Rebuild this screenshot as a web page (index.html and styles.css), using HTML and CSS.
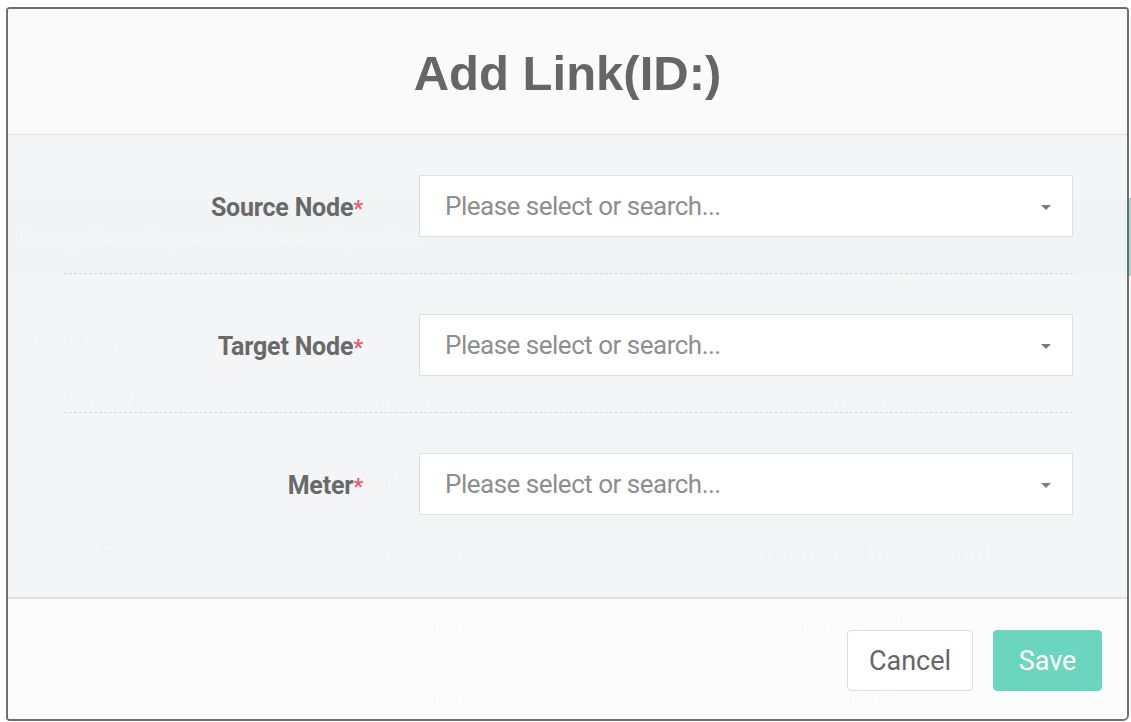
FILE: index.html
```html
<!DOCTYPE html>
<html lang="en">
<head>
<meta charset="utf-8">
<title>Add Link</title>
<link rel="stylesheet" href="styles.css">
</head>
<body>
<div class="stage">
  <div class="ghost" aria-hidden="true">
    <div class="ghost-band"><span>Energy flow diagram / Links configuration</span></div>
    <div class="ghost-toolbar"><span class="ghost-btn">&#8853; Add Link</span></div>
    <div class="ghost-table">
      <div class="g-row g-head"><span>Link ID &#8693;</span><span>Source Node &#8693;</span><span>Target Node &#8693;</span></div>
      <div class="g-row"><span>1</span><span>V li</span><span>public power</span></div>
      <div class="g-row"><span>5</span><span>public power</span><span>municipal power grid</span></div>
      <div class="g-row"><span>6</span><span>public power</span><span>office building</span></div>
      <div class="g-row g-last"><span>7</span><span>public power</span><span>hotel</span></div>
    </div>
  </div>

  <div class="modal">
    <header class="modal-header">
      <h1 class="modal-title">Add Link(ID:)</h1>
    </header>
    <div class="modal-body">
      <div class="form-row">
        <label class="form-label">Source Node<span class="req">*</span></label>
        <div class="select"><span class="placeholder">Please select or search...</span><span class="caret"></span></div>
      </div>
      <div class="form-row">
        <label class="form-label">Target Node<span class="req">*</span></label>
        <div class="select"><span class="placeholder">Please select or search...</span><span class="caret"></span></div>
      </div>
      <div class="form-row last">
        <label class="form-label">Meter<span class="req">*</span></label>
        <div class="select"><span class="placeholder">Please select or search...</span><span class="caret"></span></div>
      </div>
    </div>
    <footer class="modal-footer">
      <button class="btn btn-cancel" type="button">Cancel</button>
      <button class="btn btn-save" type="button">Save</button>
    </footer>
  </div>
</div>
</body>
</html>
```

FILE: styles.css
```css
* { box-sizing: border-box; }

html, body {
  margin: 0;
  padding: 0;
  background: #ffffff;
  font-family: Roboto, "Liberation Sans", Arial, sans-serif;
}

.stage {
  display: grid;
  grid-template-columns: 1131px;
  grid-template-rows: 722px;
  width: 1131px;
  height: 722px;
  overflow: hidden;
}

.stage > .ghost,
.stage > .modal {
  grid-area: 1 / 1;
}

/* faint page content behind the dialog */
.ghost {
  display: flex;
  flex-direction: column;
  margin-left: 6px;
  padding-top: 198px;
  color: #222;
  font-size: 24px;
  opacity: 0.35;
  overflow: hidden;
}

.ghost > * { flex-shrink: 0; }

.ghost-band {
  height: 78px;
  background: #1d7a66;
  color: #fff;
  display: flex;
  align-items: center;
  padding-left: 12px;
  font-size: 22px;
}

.ghost-toolbar {
  padding-top: 37px;
  height: 98px;
}

.ghost-btn {
  display: inline-flex;
  align-items: center;
  height: 60px;
  width: 152px;
  padding-left: 8px;
  border: 2px solid #333;
  border-radius: 30px;
  font-size: 24px;
}

.ghost-table {
  display: flex;
  flex-direction: column;
  margin-top: 9px;
}

.g-row {
  display: grid;
  grid-template-columns: 200px 444px 450px;
  height: 73px;
  flex-shrink: 0;
  align-items: center;
  text-align: center;
}

.g-row > span:nth-child(2) {
  text-align: left;
  padding-left: 156px;
}

.g-head {
  height: 40px;
  margin-bottom: 20px;
  font-size: 20px;
}

.g-head > span:nth-child(2) {
  padding-left: 142px;
}

.g-row.g-last {
  height: 50px;
  align-items: end;
}

/* dialog */
.modal {
  margin: 7px 2px 1px 6px;
  border: 2px solid #6f6f6f;
  border-radius: 4px 4px 6px 4px;
  display: flex;
  flex-direction: column;
  overflow: hidden;
  z-index: 1;
}

.modal-header {
  height: 126px;
  background: rgba(250, 250, 250, 0.99);
  border-bottom: 1px solid #e3e3e3;
  display: flex;
  align-items: center;
  justify-content: center;
}

.modal-title {
  margin: 0;
  padding-top: 2px;
  font-family: "Liberation Sans", Arial, sans-serif;
  font-weight: bold;
  font-size: 49px;
  color: #666666;
}

.modal-body {
  flex: 1;
  background: rgba(244, 245, 247, 0.965);
  padding: 0 54px 0 56px;
  display: flex;
  flex-direction: column;
}

.form-row {
  display: grid;
  grid-template-columns: 299px 654px;
  column-gap: 56px;
  align-items: center;
  padding: 40px 0 36px;
  border-bottom: 1px dashed #d6d6d8;
}

.form-row.last {
  border-bottom: none;
}

.form-label {
  text-align: right;
  font-weight: bold;
  font-size: 25px;
  color: #696969;
  letter-spacing: -0.2px;
  padding-top: 2px;
}

.req {
  color: #e4606d;
  font-size: 22px;
}

.select {
  height: 62px;
  background: #ffffff;
  border: 1px solid #dfe0e2;
  display: flex;
  align-items: center;
  justify-content: space-between;
  padding: 0 21px 0 25px;
}

.placeholder {
  font-size: 26px;
  letter-spacing: -0.5px;
  color: #8e8e8e;
}

.caret {
  width: 0;
  height: 0;
  border-left: 5px solid transparent;
  border-right: 5px solid transparent;
  border-top: 5px solid #7a7a7a;
  margin-top: 2px;
}

.modal-footer {
  height: 122px;
  background: rgba(252, 252, 252, 0.975);
  border-top: 2px solid #e2e2e2;
  display: flex;
  justify-content: flex-end;
  align-items: flex-start;
  gap: 20px;
  padding: 31px 25px 0 0;
}

.btn {
  height: 61px;
  font-family: Roboto, "Liberation Sans", Arial, sans-serif;
  font-size: 27px;
  border-radius: 4px;
  cursor: pointer;
}

.btn-cancel {
  width: 126px;
  background: #ffffff;
  border: 1px solid #dcdcdc;
  color: #666666;
}

.btn-save {
  width: 109px;
  background: #6cd5c0;
  border: 1px solid #6cd5c0;
  color: #ffffff;
}
```
